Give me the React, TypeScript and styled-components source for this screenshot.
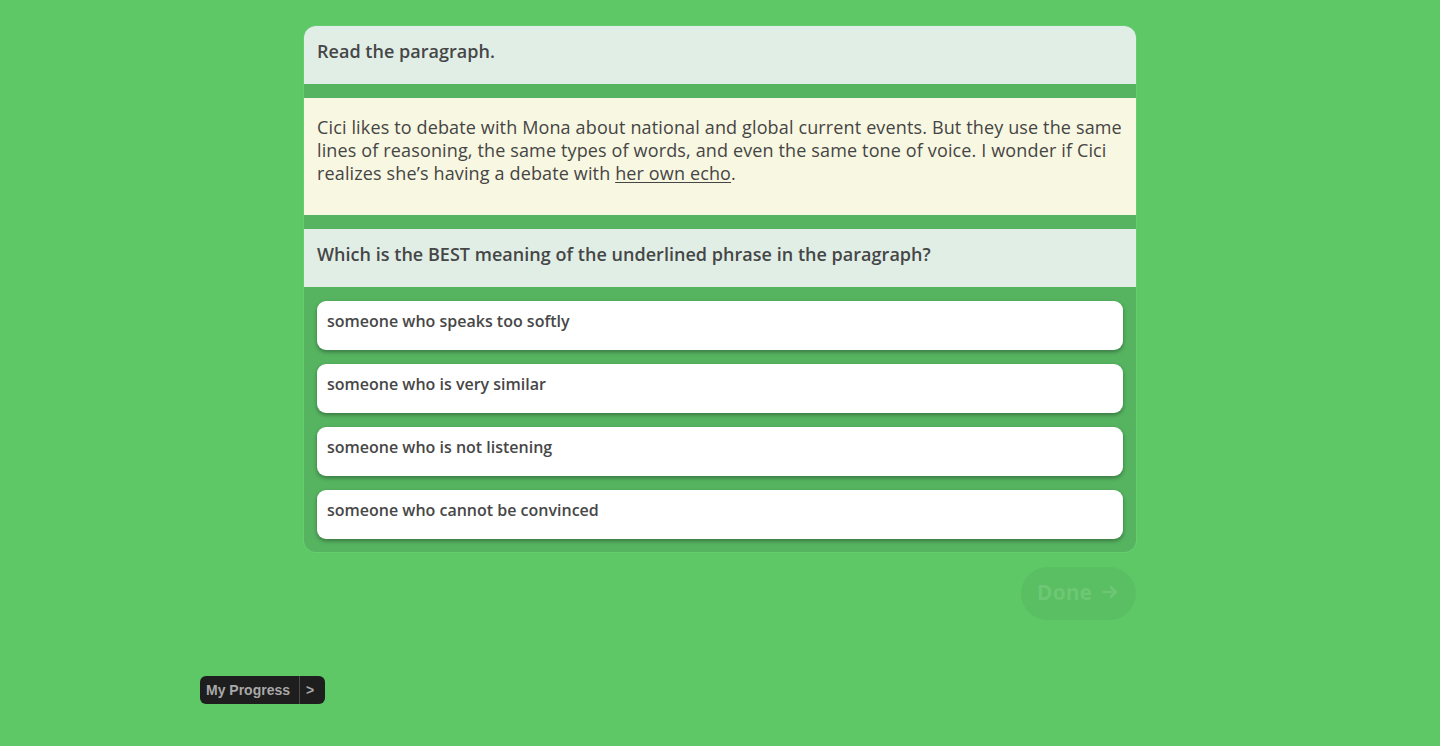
import React from "react";
import styled, { createGlobalStyle } from "styled-components";

const Global = createGlobalStyle`
  html, body { margin: 0; padding: 0; }
  body {
    background: #5ec766;
    font-family: "Open Sans", "Noto Sans", sans-serif;
    color: #454545;
  }
`;

const Page = styled.main`
  width: 832px;
  margin: 0 auto;
  padding-top: 26px;
  display: flex;
  flex-direction: column;
`;

const Card = styled.section`
  background: #56b461;
  border-radius: 12px;
  overflow: hidden;
  display: flex;
  flex-direction: column;
  gap: 14px;
  padding-bottom: 13px;
  box-shadow: 0 0 0 1px #66cd70;
`;

const Prompt = styled.div`
  background: #e0eee6;
  height: 58px;
  box-sizing: border-box;
  padding: 13px 13px;
  font-size: 18px;
  line-height: 24px;
  font-weight: 600;
  color: #464646;
  letter-spacing: 0.03px;
`;

const Passage = styled.div`
  background: #f8f7e1;
  height: 117px;
  box-sizing: border-box;
  padding: 18px 13px;
  font-size: 18px;
  line-height: 23px;
  font-weight: 400;
  letter-spacing: 0.14px;
  color: #454545;
`;

const Underlined = styled.span`
  text-decoration: underline;
  text-underline-offset: 2px;
`;

const Options = styled.div`
  display: flex;
  flex-direction: column;
  gap: 14px;
  padding: 0 13px;
`;

const Option = styled.button`
  all: unset;
  box-sizing: border-box;
  display: flex;
  align-items: flex-start;
  height: 49px;
  background: #ffffff;
  border-radius: 9px;
  padding: 9px 10px 0;
  font-family: "Open Sans", "Noto Sans", sans-serif;
  font-size: 16px;
  line-height: 22px;
  font-weight: 600;
  color: #474747;
  box-shadow: 0 2px 4px rgba(0, 0, 0, 0.35);
  cursor: pointer;
`;

const Footer = styled.div`
  display: flex;
  justify-content: flex-end;
  margin-top: 15px;
`;

const DoneButton = styled.button`
  all: unset;
  width: 115px;
  height: 53px;
  border-radius: 27px;
  background: rgba(0, 0, 0, 0.04);
  display: flex;
  align-items: center;
  justify-content: center;
  gap: 8px;
  padding-bottom: 3px;
  box-sizing: border-box;
  font-family: "Open Sans", "Noto Sans", sans-serif;
  font-size: 21px;
  font-weight: 700;
  color: rgba(255, 255, 255, 0.12);
`;

const Progress = styled.div`
  position: fixed;
  left: 200px;
  top: 676px;
  height: 28px;
  display: flex;
  align-items: stretch;
  background: #1e1e1e;
  border-radius: 6px;
  font-family: "Liberation Sans", Arial, sans-serif;
  font-weight: 700;
  font-size: 14px;
  color: #a9a9a9;
`;

const ProgressLabel = styled.span`
  display: flex;
  align-items: center;
  padding: 0 9px 0 6px;
  border-right: 1px solid #4a4a4a;
`;

const ProgressArrow = styled.span`
  display: flex;
  align-items: center;
  padding: 0 11px 0 6px;
`;

const options = [
  "someone who speaks too softly",
  "someone who is very similar",
  "someone who is not listening",
  "someone who cannot be convinced",
];

export default function App() {
  return (
    <>
      <Global />
      <Page>
        <Card>
          <Prompt>Read the paragraph.</Prompt>
          <Passage>
            Cici likes to debate with Mona about national and global current events. But they use the same
            lines of reasoning, the same types of words, and even the same tone of voice. I wonder if Cici
            realizes she’s having a debate with <Underlined>her own echo</Underlined>.
          </Passage>
          <Prompt>Which is the BEST meaning of the underlined phrase in the paragraph?</Prompt>
          <Options>
            {options.map((o) => (
              <Option key={o}>{o}</Option>
            ))}
          </Options>
        </Card>
        <Footer>
          <DoneButton>
            Done
            <svg width="20" height="20" viewBox="0 0 24 24" fill="none" stroke="currentColor" strokeWidth="3" strokeLinecap="round" strokeLinejoin="round">
              <path d="M4 12h15M13 6l6 6-6 6" />
            </svg>
          </DoneButton>
        </Footer>
      </Page>
      <Progress>
        <ProgressLabel>My Progress</ProgressLabel>
        <ProgressArrow>&gt;</ProgressArrow>
      </Progress>
    </>
  );
}
